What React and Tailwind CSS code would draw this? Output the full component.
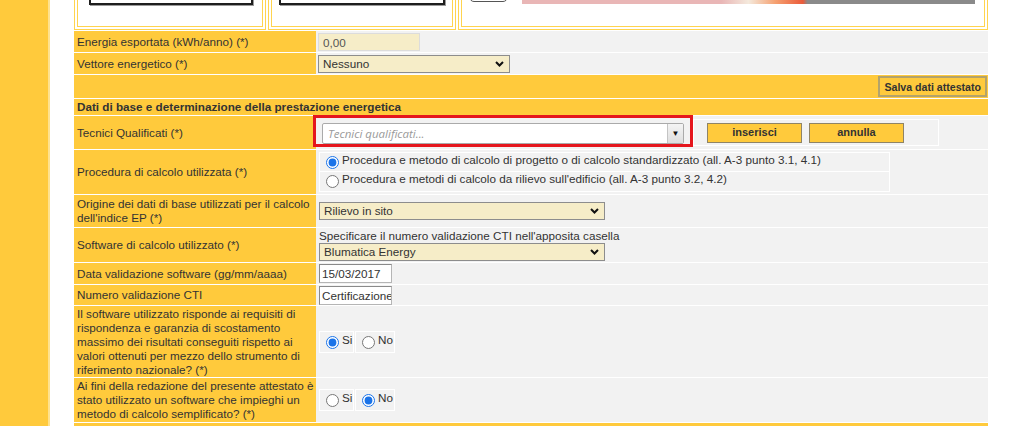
import React from 'react';

function Row({ label, h, children, valueClass = '' }) {
  return (
    <div className={`grid grid-cols-[242px_1fr] ${h}`}>
      <div className="bg-[#ffca3c] flex items-center px-[3px] leading-[14px] whitespace-nowrap">{label}</div>
      <div className={`bg-[#f2f2f2] ${valueClass}`}>{children}</div>
    </div>
  );
}

function Chevron() {
  return (
    <svg width="9" height="6" viewBox="0 0 9 6">
      <path d="M1 1l3.5 3.5L8 1" fill="none" stroke="#111" strokeWidth="2" />
    </svg>
  );
}

function Select({ value, w }) {
  return (
    <div className={`flex items-center justify-between h-[18px] ${w} bg-[#f6edc8] border border-[#8d8d8d] pl-[4px] pr-[5px]`}>
      <span className="leading-[14px]">{value}</span>
      <Chevron />
    </div>
  );
}

function Radio({ name, checked, label }) {
  return (
    <label className="flex items-start">
      <input
        type="radio"
        name={name}
        defaultChecked={checked}
        className="w-[13px] h-[13px] mt-[3px] ml-[5px] mr-[3px] accent-[#1a73e8]"
      />
      <span className="leading-[14px]">{label}</span>
    </label>
  );
}

function YesNo({ name, yes }) {
  return (
    <div className="flex gap-px">
      <div className="w-[35px] h-[22px] border border-white p-[1px]">
        <Radio name={name} checked={yes} label="Si" />
      </div>
      <div className="w-[40px] h-[22px] border border-white p-[1px]">
        <Radio name={name} checked={!yes} label="No" />
      </div>
    </div>
  );
}

export default function App() {
  return (
    <div className="flex min-h-screen bg-white font-['Liberation_Sans',Arial,sans-serif] text-[11.7px] text-[#333] overflow-hidden">
      <aside className="w-[50px] shrink-0 bg-[#ffca3c] border-r-2 border-[#ffe28e]" />

      <main className="ml-[24px] w-[914px] flex flex-col gap-px -mt-[50px]">
        {/* attestato cards, scrolled out at the top */}
        <div className="flex gap-[2px] h-[80px]">
          <div className="w-[192px] border-4 border-double border-[#ffd44f] bg-white pl-[11px] pr-[9px]">
            <div className="mt-[6px] h-[45px] border-2 border-[#1e1e1e] shadow-[1px_1px_0_#9a9a9a]" />
          </div>
          <div className="w-[188px] border-4 border-double border-[#ffd44f] bg-white px-[7px]">
            <div className="mt-[6px] h-[45px] border-2 border-[#1e1e1e] shadow-[1px_1px_0_#9a9a9a]" />
          </div>
          <div className="flex-1 border-4 border-double border-[#ffd44f] bg-white pl-[7px] flex items-start gap-[14px]">
            <div className="mt-[18px] w-[39px] h-[30px] border border-[#555] rounded-b-[5px]" />
            <div className="mt-[28px] w-[453px] h-[22px] bg-[linear-gradient(90deg,#e9b6b6_0%,#e9b6b6_44%,#f4e9dc_50%,#f5a070_56%,#ea5a3a_62%,#8a8a8a_63%,#8a8a8a_100%)]" />
          </div>
        </div>

        <Row label="Energia esportata (kWh/anno) (*)" h="h-[21px]" valueClass="pl-[2px] pt-[2px]">
          <input
            readOnly
            value="0,00"
            className="block w-[102px] h-[18px] bg-[#f6edc8] border border-[#dcdcdc] px-[4px] text-[#555] outline-none"
          />
        </Row>

        <Row label="Vettore energetico (*)" h="h-[21px]" valueClass="pl-[2px] pt-[2px]">
          <Select value="Nessuno" w="w-[192px]" />
        </Row>

        <div className="h-[23px] bg-[#ffca3c] flex items-center justify-end pr-[1px]">
          <button className="h-[21px] px-[4px] border-2 border-[#b3a36b] bg-[#ffca3c] font-bold text-[10.6px] leading-[14px]">
            Salva dati attestato
          </button>
        </div>

        <div className="h-[16px] bg-[#ffca3c] flex items-center px-[3px] font-bold leading-[14px]">
          Dati di base e determinazione della prestazione energetica
        </div>

        <Row label="Tecnici Qualificati (*)" h="h-[33px]" valueClass="relative flex items-start">
          <div className="w-[377px] pl-[6px] pt-[7px]">
            <div className="flex h-[21px] w-[362px] bg-white border border-[#aaa] rounded-[2px] overflow-hidden">
              <span className="flex-1 pl-[5px] leading-[19px] italic text-[#9a9a9a] text-[11.5px] font-['Open_Sans',sans-serif]">
                Tecnici qualificati...
              </span>
              <span className="w-[16px] flex items-center justify-center border-l border-[#c4c4c4] bg-[linear-gradient(#f4f4f4,#dedede)] text-[8px] text-[#111]">
                ▼
              </span>
            </div>
          </div>
          <div className="mt-[3px] w-[246px] h-[27px] border border-white flex items-center pl-[13px] gap-[7px]">
            <button className="w-[95px] h-[20px] bg-[#ffca3c] border border-[#8f8466] font-bold text-[11px]">inserisci</button>
            <button className="w-[95px] h-[20px] bg-[#ffca3c] border border-[#8f8466] font-bold text-[11px]">annulla</button>
          </div>
          <div className="absolute left-[-3px] top-[-1px] w-[380px] h-[32px] border-[3px] border-[#e5161d]" />
        </Row>

        <Row label="Procedura di calcolo utilizzata (*)" h="h-[44px]" valueClass="pl-[3px] pt-[2px]">
          <div className="w-[571px] flex flex-col">
            <div className="h-[20px] border border-white px-[1px]">
              <Radio name="proc" checked label="Procedura e metodo di calcolo di progetto o di calcolo standardizzato (all. A-3 punto 3.1, 4.1)" />
            </div>
            <div className="h-[20px] border border-t-0 border-white px-[1px]">
              <Radio name="proc" label="Procedura e metodi di calcolo da rilievo sull'edificio (all. A-3 punto 3.2, 4.2)" />
            </div>
          </div>
        </Row>

        <Row
          label={<span>Origine dei dati di base utilizzati per il calcolo<br />dell'indice EP (*)</span>}
          h="h-[32px]"
          valueClass="pl-[3px] flex items-center"
        >
          <Select value="Rilievo in sito" w="w-[286px]" />
        </Row>

        <Row label="Software di calcolo utilizzato (*)" h="h-[34px]" valueClass="pl-[3px] pt-[1px]">
          <div className="leading-[14px]">Specificare il numero validazione CTI nell'apposita casella</div>
          <Select value="Blumatica Energy" w="w-[286px]" />
        </Row>

        <Row label="Data validazione software (gg/mm/aaaa)" h="h-[21px]" valueClass="pl-[3px] pt-[1px]">
          <input
            readOnly
            value="15/03/2017"
            className="block w-[73px] h-[19px] bg-white border border-[#b5b5b5] border-t-[#8a8a8a] border-l-[#8a8a8a] pl-[2px] pr-0 outline-none"
          />
        </Row>

        <Row label="Numero validazione CTI" h="h-[20px]" valueClass="pl-[3px] pt-[1px]">
          <input
            readOnly
            value="Certificazione"
            className="block w-[73px] h-[19px] bg-white border border-[#b5b5b5] border-t-[#8a8a8a] border-l-[#8a8a8a] pl-[2px] pr-0 outline-none"
          />
        </Row>

        <Row
          label={
            <span>
              Il software utilizzato risponde ai requisiti di<br />
              rispondenza e garanzia di scostamento<br />
              massimo dei risultati conseguiti rispetto ai<br />
              valori ottenuti per mezzo dello strumento di<br />
              riferimento nazionale? (*)
            </span>
          }
          h="h-[71px]"
          valueClass="pl-[3px] flex items-center"
        >
          <YesNo name="rif" yes />
        </Row>

        <Row
          label={
            <span>
              Ai fini della redazione del presente attestato è<br />
              stato utilizzato un software che impieghi un<br />
              metodo di calcolo semplificato? (*)
            </span>
          }
          h="h-[44px]"
          valueClass="pl-[3px] flex items-center"
        >
          <YesNo name="sempl" yes={false} />
        </Row>

        <div className="h-[40px] bg-[#ffca3c]" />
      </main>
    </div>
  );
}
